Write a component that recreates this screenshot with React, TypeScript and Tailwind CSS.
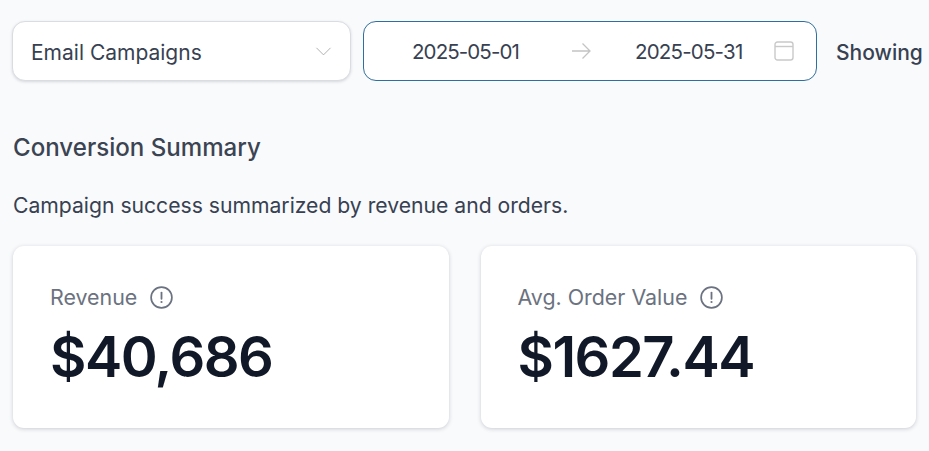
import { ChevronDown } from "lucide-react";

function InfoIcon() {
    return (
        <svg width="23" height="23" viewBox="0 0 23 23" fill="none" className="shrink-0">
            <circle cx="11.5" cy="11.5" r="10.4" stroke="#6b7280" strokeWidth="1.7" />
            <path d="M11.5 6.6v6.2" stroke="#6b7280" strokeWidth="1.8" strokeLinecap="round" />
            <circle cx="11.5" cy="16" r="1.1" fill="#6b7280" />
        </svg>
    );
}

function StatCard({ label, value }: { label: string; value: string }) {
    return (
        <div className="flex-1 h-[182px] rounded-[11px] bg-white shadow-[0_1px_4px_rgba(15,23,42,0.2)] pl-[37px] pt-[38px]">
            <div className="flex items-center gap-[13px] h-[27px] text-[21.4px] text-[#6b7280]">
                <span className="whitespace-nowrap">{label}</span>
                <InfoIcon />
            </div>
            <div className="mt-[8px] text-[56px] tracking-[-1.5px] leading-[76px] font-semibold text-[#111827]">{value}</div>
        </div>
    );
}

export default function App() {
    return (
        <div className="w-[929px] h-[451px] overflow-hidden bg-[#f9fafc] font-['Inter',sans-serif] pl-[12px] pt-[21px]">
            <div className="flex items-center gap-[12px] w-[1100px]">
                <div className="w-[339px] h-[60px] shrink-0 flex items-center justify-between pl-[18px] pr-[13px] bg-white rounded-[13px] border border-[#d9dce1] shadow-[0_1px_3px_rgba(15,23,42,0.15)]">
                    <span className="pt-[3px] text-[21px] text-[#374151]">Email Campaigns</span>
                    <ChevronDown size={27} strokeWidth={0.8} className="shrink-0 text-[#a8a8a8]" />
                </div>
                <div className="w-[454px] h-[60px] shrink-0 flex items-center bg-white rounded-[13px] border border-[#2f6f9f] pl-[48px] whitespace-nowrap">
                    <span className="w-[108px] shrink-0 pt-[3px] text-[20.500px] tracking-[-0.900px] text-[#374151]">2025-05-01</span>
                    <svg width="20" height="18" viewBox="0 0 20 18" fill="none" className="ml-[51px] shrink-0">
                        <path d="M1 9h18M11.500 1.500 19 9l-7.500 7.500" stroke="#c4c4c4" strokeWidth="1.3" />
                    </svg>
                    <span className="w-[108px] shrink-0 ml-[44px] pt-[3px] text-[20.500px] tracking-[-0.800px] text-[#374151]">2025-05-31</span>
                    <svg width="20" height="20" viewBox="0 0 20 20" fill="none" className="ml-[31px] shrink-0">
                        <rect x="1" y="1" width="18" height="18" rx="2.500" stroke="#c9c9c9" strokeWidth="1.400" />
                        <path d="M1 5.500h18" stroke="#c9c9c9" strokeWidth="1.400" />
                    </svg>
                </div>
                <span className="ml-[7px] pt-[3px] text-[21px] font-medium text-[#374151]">Showing</span>
            </div>

            <h2 className="ml-[1px] mt-[51px] text-[24.100px] leading-[32px] font-medium text-[#3b4452]">Conversion Summary</h2>
            <p className="ml-[1px] mt-[27px] text-[21.150px] leading-[30px] text-[#374151]">Campaign success summarized by revenue and orders.</p>

            <div className="ml-[1px] mt-[25px] flex gap-[32px] w-[903px]">
                <StatCard label="Revenue" value="$40,686" />
                <StatCard label="Avg. Order Value" value="$1627.44" />
            </div>
        </div>
    );
}
